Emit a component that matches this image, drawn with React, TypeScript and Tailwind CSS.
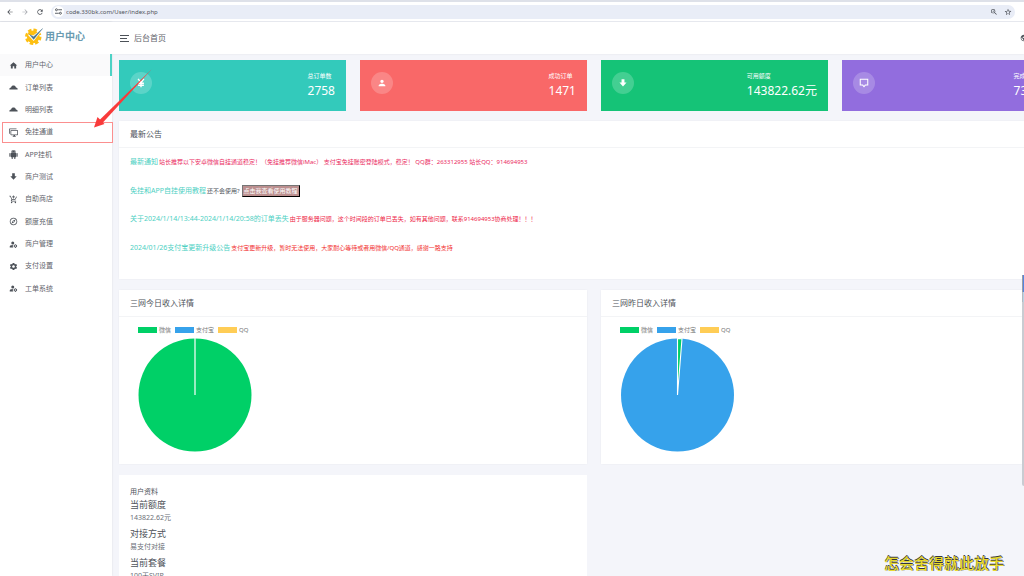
import type { ReactNode } from "react";
import {
  MdArrowBack,
  MdArrowForward,
  MdHome,
  MdManageAccounts,
  MdOutlineAddShoppingCart,
  MdOutlineExplore,
  MdPerson,
  MdPublic,
  MdRefresh,
  MdSettings,
  MdStarBorder,
  MdZoomIn,
} from "react-icons/md";

function DownArrow() {
  return (
    <svg viewBox="0 0 24 24" className="size-full" fill="currentColor" aria-hidden="true">
      <path d="M8.500 3h7v8h5L12 20.500 3.500 11h5V3z" />
    </svg>
  );
}

function CloudTop() {
  return (
    <svg viewBox="0 0 24 24" className="size-full" fill="currentColor" aria-hidden="true">
      <path d="M1 17.500c-.5-3 1-5.500 4.500-5.700C6.500 8 9 6.500 12 6.500s5.500 1.500 6.500 5.300c3.500.2 5 2.700 4.500 5.700z" />
    </svg>
  );
}

function Robot() {
  return (
    <svg viewBox="0 0 24 24" className="size-full" fill="currentColor" aria-hidden="true">
      <path d="M16 5h-1V4h1m-6 1H9V4h1m6.100-2.200L17 .9 16.300 0l-1.500 1.500a6 6 0 0 0-5.600 0L7.700 0 7 .9l1 1A6 6 0 0 0 6 7h12a6 6 0 0 0-1.900-5.200zM21.500 8A1.500 1.500 0 0 0 20 9.500v7a1.500 1.500 0 0 0 3 0v-7A1.500 1.500 0 0 0 21.500 8zm-19 0A1.500 1.500 0 0 0 1 9.500v7a1.500 1.500 0 0 0 3 0v-7A1.500 1.500 0 0 0 2.500 8zM5 18a1 1 0 0 0 1 1h1v3.500a1.500 1.500 0 0 0 3 0V19h4v3.500a1.500 1.500 0 0 0 3 0V19h1a1 1 0 0 0 1-1V8H5z" />
    </svg>
  );
}

function Screens() {
  return (
    <svg viewBox="0 0 24 24" className="size-full" fill="currentColor" aria-hidden="true">
      <path d="M22 17V7H6v10h16m0-12a2 2 0 0 1 2 2v10a2 2 0 0 1-2 2h-6v2h2v2h-8v-2h2v-2H6a2 2 0 0 1-2-2V7a2 2 0 0 1 2-2h16M2 3v12H0V3a2 2 0 0 1 2-2h18v2H2z" />
    </svg>
  );
}

function Bubble() {
  return (
    <svg viewBox="0 0 24 24" className="size-full" fill="none" stroke="currentColor" strokeWidth="2.500" aria-hidden="true">
      <path d="M3 3h18v14h-6l-3 4-3-4H3z" />
    </svg>
  );
}

function Yen() {
  return (
    <svg viewBox="0 0 24 24" className="size-full" fill="none" stroke="currentColor" strokeWidth="3.500" aria-hidden="true">
      <path d="M5 2l7 9 7-9M12 11v11M5 12.500h14M5 17.500h14" />
    </svg>
  );
}

function GearCheck() {
  return (
    <svg viewBox="0 0 48 48" className="size-[18px]" aria-hidden="true">
      <circle cx="22" cy="26" r="17" fill="#fdbf12" />
      <circle cx="22" cy="26" r="18" fill="none" stroke="#fdbf12" strokeWidth="8" strokeDasharray="9 5.137" />
      <path d="M11 22l12 13L46 6 23 24z" fill="#fff" stroke="#fff" strokeWidth="3" />
      <path d="M12 20l11 13L47 4 23 26z" fill="#48748c" stroke="#48748c" />
    </svg>
  );
}

const menu: { label: string; icon: ReactNode; active?: boolean }[] = [
  { label: "用户中心", icon: <MdHome className="size-full" />, active: true },
  { label: "订单列表", icon: <CloudTop /> },
  { label: "明细列表", icon: <CloudTop /> },
  { label: "免挂通道", icon: <Screens /> },
  { label: "APP挂机", icon: <Robot /> },
  { label: "商户测试", icon: <DownArrow /> },
  { label: "自助商店", icon: <MdOutlineAddShoppingCart className="size-full" /> },
  { label: "额度充值", icon: <MdOutlineExplore className="size-full" /> },
  { label: "商户管理", icon: <MdManageAccounts className="size-full" /> },
  { label: "支付设置", icon: <MdSettings className="size-full" /> },
  { label: "工单系统", icon: <MdManageAccounts className="size-full" /> },
];

const stats = [
  { label: "总订单数", value: "2758", icon: <Yen />, tone: "bg-[#33cabb]" },
  { label: "成功订单", value: "1471", icon: <MdPerson className="size-full" />, tone: "bg-[#f96868]" },
  { label: "可用额度", value: "143822.62元", icon: <DownArrow />, tone: "bg-[#15c377]" },
  { label: "完成金额", value: "73015.2", icon: <Bubble />, tone: "bg-[#926dde]" },
];

function BrowserBar() {
  return (
    <div className="h-[22px] shrink-0 border-t-2 border-b border-t-[#dee1e9] border-b-[#e6e8ee] bg-white flex items-center px-[6px] text-[#474b52]">
      <button type="button" aria-label="返回" className="size-[8px] mr-[7px]"><MdArrowBack className="size-full" /></button>
      <button type="button" aria-label="前进" className="size-[8px] mr-[7px] text-[#a5a8ae]"><MdArrowForward className="size-full" /></button>
      <button type="button" aria-label="刷新" className="size-[8px] mr-[7px]"><MdRefresh className="size-full" /></button>
      <div className="h-[14px] flex-1 rounded-full bg-[#e9edf7] flex items-center pl-[2px] pr-[3px]">
        <span className="size-[11px] rounded-full bg-white flex items-center justify-center">
          <svg viewBox="0 0 12 12" className="size-[7px]" fill="none" stroke="currentColor" strokeWidth="1.500" aria-hidden="true">
            <path d="M5.500 3H12M0 9h6.500" />
            <circle cx="2.500" cy="3" r="1.700" />
            <circle cx="9.300" cy="9" r="1.700" />
          </svg>
        </span>
        <input
          aria-label="地址"
          defaultValue="code.330bk.com/User/index.php"
          className="ml-[2px] flex-1 bg-transparent text-[6px] leading-[8px] text-[#50535a] outline-none"
        />
        <MdZoomIn className="size-[8px] mr-[6px]" />
        <MdStarBorder className="size-[8px]" />
      </div>
      <span className="w-[3px]" />
    </div>
  );
}

function Sidebar() {
  return (
    <aside className="w-[112px] shrink-0 bg-white shadow-[0_0_2px_rgba(0,0,0,0.1)]">
      <a href="#home" className="h-8 flex items-center gap-[2px] pl-[25px] pb-1 text-[10px] leading-[14px] font-bold text-[#6a9bb0]">
        <GearCheck />
        <span>用户中心</span>
      </a>
      <nav className="h-[246px] grid auto-rows-fr">
        {menu.map((m) => (
          <a
            key={m.label}
            href="#menu"
            className={
              m.active
                ? "flex items-center gap-[7px] pl-[9px] border-r-2 border-[#4dd2c5] bg-[#fafafb] text-[7px] leading-[10px] text-[#5f646b]"
                : "flex items-center gap-[7px] pl-[9px] text-[7px] leading-[10px] text-[#5f646b]"
            }
          >
            <span className="size-[9px] text-[#4d5259]">{m.icon}</span>
            {m.label}
          </a>
        ))}
      </nav>
    </aside>
  );
}

function Panel({ title, children, className }: { title: string; children: ReactNode; className: string }) {
  return (
    <section className={className}>
      <h4 className="h-[27px] border-b border-[#f3f4f6] px-[11px] text-[8px] leading-[26px] text-[#4d5259]">{title}</h4>
      {children}
    </section>
  );
}

const legend = [
  { name: "微信", tone: "bg-[#00d067]" },
  { name: "支付宝", tone: "bg-[#36a2eb]" },
  { name: "QQ", tone: "bg-[#ffcd56]" },
];

function PieCard({ title, children }: { title: string; children: ReactNode }) {
  return (
    <Panel title={title} className="h-[174px] bg-white shadow-[0_0_2px_rgba(0,0,0,0.05)]">
      <div className="flex gap-[4px] pt-[9px] pl-[19px]">
        {legend.map((l) => (
          <div key={l.name} className="flex items-center gap-[2px] text-[6px] leading-[8px] text-[#777]">
            <span className={l.tone + " w-[19px] h-[6px]"} />
            {l.name}
          </div>
        ))}
      </div>
      <svg viewBox="0 0 114 114" className="ml-[19px] mt-[4px] size-[114px]" role="img" aria-label={title}>
        {children}
      </svg>
    </Panel>
  );
}

const notices = [
  {
    title: "最新通知",
    text: "站长推荐以下安卓微信自挂通道稳定！（免挂推荐微信iMac） 支付宝免挂账密登陆模式，稳定！ QQ群：263312955 站长QQ：914694953",
    tone: "text-[#ea2a62]",
  },
  { title: "免挂和APP自挂使用教程", text: "还不会使用?", tone: "text-[#4d5259]", action: "点击我查看使用教程" },
  {
    title: "关于2024/1/14/13:44-2024/1/14/20:58的订单丢失",
    text: "由于服务器问题，这个时间段的订单已丢失，如有其他问题，联系914694953协商处理！！！",
    tone: "text-[#ee2447]",
  },
  {
    title: "2024/01/26支付宝更新升级公告",
    text: "支付宝更新升级，暂时无法使用，大家耐心等待或者用微信/QQ通道，感谢一路支持",
    tone: "text-[#f22d2d]",
  },
];

const profile = [
  { name: "当前额度", value: "143822.62元" },
  { name: "对接方式", value: "易支付对接" },
  { name: "当前套餐", value: "100天SVIP" },
];

export default function App() {
  return (
    <div className="relative h-screen overflow-hidden flex flex-col bg-[#f4f5fa] font-['Noto_Sans','Noto_Sans_CJK_SC',sans-serif] text-[#4d5259]">
      <BrowserBar />
      <div className="flex flex-1 min-h-0">
        <Sidebar />
        <div className="flex-1 min-w-0 overflow-hidden">
          <header className="h-8 bg-white flex items-center pl-[8px] shadow-[0_0_2px_rgba(0,0,0,0.08)]">
            <button type="button" aria-label="菜单" className="flex flex-col gap-[2px]">
              <span className="w-[9px] h-[1px] bg-[#4d5259]" />
              <span className="w-[7px] h-[1px] bg-[#4d5259]" />
              <span className="w-[9px] h-[1px] bg-[#4d5259]" />
            </button>
            <span className="ml-[5px] flex-1 text-[8px] leading-[12px] text-[#5f646b]">后台首页</span>
            <MdPublic className="size-[8px] -mr-[4px]" />
          </header>
          <main className="pl-[7px] pt-[6px] -mr-[45px]">
            <div className="grid grid-cols-4 gap-[14px]">
              {stats.map((s) => (
                <div key={s.label} className={s.tone + " h-[51px] flex justify-between px-[11px] text-white"}>
                  <span className="mt-[12px] size-[22px] rounded-full bg-white/20 p-[6px]">{s.icon}</span>
                  <div className="pt-[12px]">
                    <p className="text-[6px] leading-[8px]">{s.label}</p>
                    <p className="mt-[2px] text-[12px] leading-[18px]">{s.value}</p>
                  </div>
                </div>
              ))}
            </div>
            <Panel title="最新公告" className="mt-[10px] h-[158px] bg-white shadow-[0_0_2px_rgba(0,0,0,0.05)]">
              <div className="h-[114px] grid auto-rows-fr px-[11px]">
                {notices.map((n) => (
                  <div key={n.title} className="flex items-center gap-[1px] whitespace-nowrap text-[6px] leading-[8px]">
                    <a href="#notice" className="text-[7px] leading-[10px] text-[#4dd0c3]">{n.title}</a>
                    <span className={n.tone}>{n.text}</span>
                    {n.action && (
                      <button type="button" className="ml-[1px] h-[12px] px-[1px] border border-t-[#767676] border-l-[#767676] border-r-black border-b-black bg-[#bc8f8f] text-white">
                        {n.action}
                      </button>
                    )}
                  </div>
                ))}
              </div>
            </Panel>
            <div className="mt-[11px] grid grid-cols-2 gap-x-[14px] gap-y-[11px]">
              <PieCard title="三网今日收入详情">
                <circle cx="57" cy="57" r="56.500" fill="#00d067" />
                <path d="M57 0V57" stroke="#fff" strokeWidth="1.200" />
              </PieCard>
              <PieCard title="三网昨日收入详情">
                <circle cx="57.500" cy="57" r="56.500" fill="#36a2eb" />
                <path d="M57.500 57V.5A56.500 56.500 0 0 1 62 .7z" fill="#00d067" stroke="#fff" strokeWidth="1.100" />
              </PieCard>
              <section className="bg-white px-[11px] pt-[11px] pb-6">
                <p className="text-[7px] leading-[12px]">用户资料</p>
                {profile.map((p) => (
                  <div key={p.name} className="mb-[3px]">
                    <h5 className="text-[9px] leading-[14px]">{p.name}</h5>
                    <p className="text-[7px] leading-[12px] text-[#6b7078]">{p.value}</p>
                  </div>
                ))}
              </section>
            </div>
          </main>
        </div>
      </div>

      <div className="absolute left-[2px] top-[122px] w-[111px] h-[21px] border border-[#fb8f8f]" />
      <svg viewBox="0 0 64 64" className="absolute left-[93px] top-[65px] size-16" fill="#f93a3a" aria-hidden="true">
        <path d="M59 4L9 58.500l-3-3z" />
        <path d="M1 62.500L4.500 52l7 7z" />
      </svg>
      <div className="absolute right-0 top-[275px] w-[2px] h-[211px] rounded-l-sm bg-[#c9ccd2] flex flex-col">
        <span className="h-[17px] border-l border-[#9a9da5] bg-[#5585e0]" />
        <span className="h-[10px] border-l border-[#b5b8be] bg-[#b7d3e6]" />
      </div>
      <p className="absolute right-[20px] bottom-[2px] text-[15px] leading-[22px] font-medium text-[#e8da2e] [text-shadow:0_-1px_0_#33353c,1px_0_0_#4a6078]">
        怎会舍得就此放手
      </p>
    </div>
  );
}
